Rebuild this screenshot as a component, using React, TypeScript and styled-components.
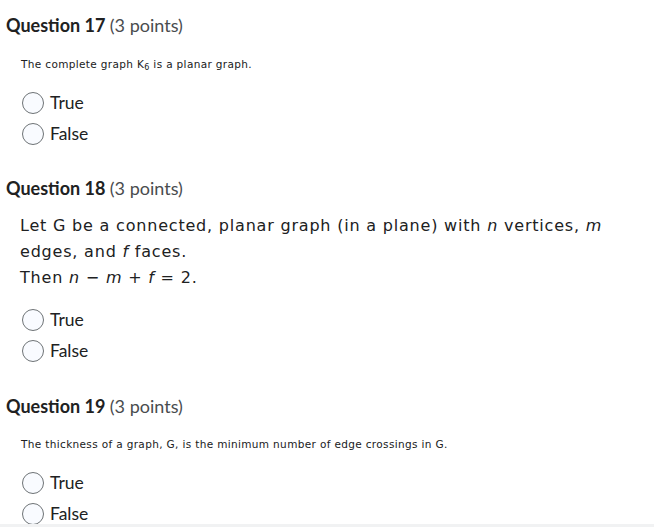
import styled, { createGlobalStyle } from "styled-components";

const GlobalStyle = createGlobalStyle`
  html, body {
    margin: 0;
    padding: 0;
    background: #fff;
    overflow: hidden;
  }
  body {
    font-family: Lato, "Open Sans", sans-serif;
    color: #202122;
  }
`;

const Page = styled.div`
  display: flex;
  flex-direction: column;
  padding: 13px 0 0 6px;
  height: 527px;
  box-sizing: border-box;
`;

const Question = styled.section<{ gapTop: number }>`
  display: flex;
  flex-direction: column;
  margin-top: ${(props) => props.gapTop}px;
`;

const Heading = styled.h2`
  margin: 0;
  height: 24px;
  line-height: 24px;
  font-size: 18px;
  font-weight: 700;
  color: #202122;

  span {
    font-weight: 400;
    color: #494c4e;
  }
`;

const SmallText = styled.p<{ gapTop: number }>`
  margin: ${(props) => props.gapTop}px 0 0 15px;
  font-family: "DejaVu Sans", sans-serif;
  font-size: 10.5px;
  line-height: 16px;
  letter-spacing: 0.35px;
  color: #202122;

  sub {
    font-size: 8px;
    vertical-align: -2px;
    line-height: 0;
  }
`;

const BigText = styled.p`
  margin: 13px 0 0 14px;
  font-family: "DejaVu Sans", sans-serif;
  font-size: 16px;
  line-height: 26px;
  letter-spacing: 0.8px;
  color: #202122;

  i {
    font-style: italic;
  }
`;

const Options = styled.div<{ gapTop: number }>`
  display: flex;
  flex-direction: column;
  margin: ${(props) => props.gapTop}px 0 0 16px;
`;

const Option = styled.label`
  display: flex;
  align-items: center;
  gap: 6px;
  height: 31px;
  font-size: 17.5px;
  color: #202122;
`;

const Radio = styled.span`
  width: 20px;
  height: 20px;
  border-radius: 50%;
  border: 1px solid #6e7376;
  background: #f9fbff;
  flex-shrink: 0;
`;

const Footer = styled.div`
  position: fixed;
  left: 0;
  right: 0;
  bottom: 0;
  height: 3px;
  background: #f1f2f3;
`;

function TrueFalse({ gapTop }: { gapTop: number }) {
  return (
    <Options gapTop={gapTop}>
      <Option>
        <Radio />
        True
      </Option>
      <Option>
        <Radio />
        False
      </Option>
    </Options>
  );
}

export default function App() {
  return (
    <>
      <GlobalStyle />
      <Page>
        <Question gapTop={0}>
          <Heading>
            Question 17 <span>(3 points)</span>
          </Heading>
          <SmallText gapTop={19}>
            The complete graph K<sub>6</sub> is a planar graph.
          </SmallText>
          <TrueFalse gapTop={15} />
        </Question>

        <Question gapTop={27}>
          <Heading>
            Question 18 <span>(3 points)</span>
          </Heading>
          <BigText>
            Let G be a connected, planar graph (in a plane) with <i>n</i> vertices, <i>m</i>
            <br />
            edges, and <i>f</i> faces.
            <br />
            Then <i>n</i> − <i>m</i> + <i>f</i> = 2.
          </BigText>
          <TrueFalse gapTop={13} />
        </Question>

        <Question gapTop={28}>
          <Heading>
            Question 19 <span>(3 points)</span>
          </Heading>
          <SmallText gapTop={18}>
            The thickness of a graph, G, is the minimum number of edge crossings in G.
          </SmallText>
          <TrueFalse gapTop={15} />
        </Question>
      </Page>
      <Footer />
    </>
  );
}
